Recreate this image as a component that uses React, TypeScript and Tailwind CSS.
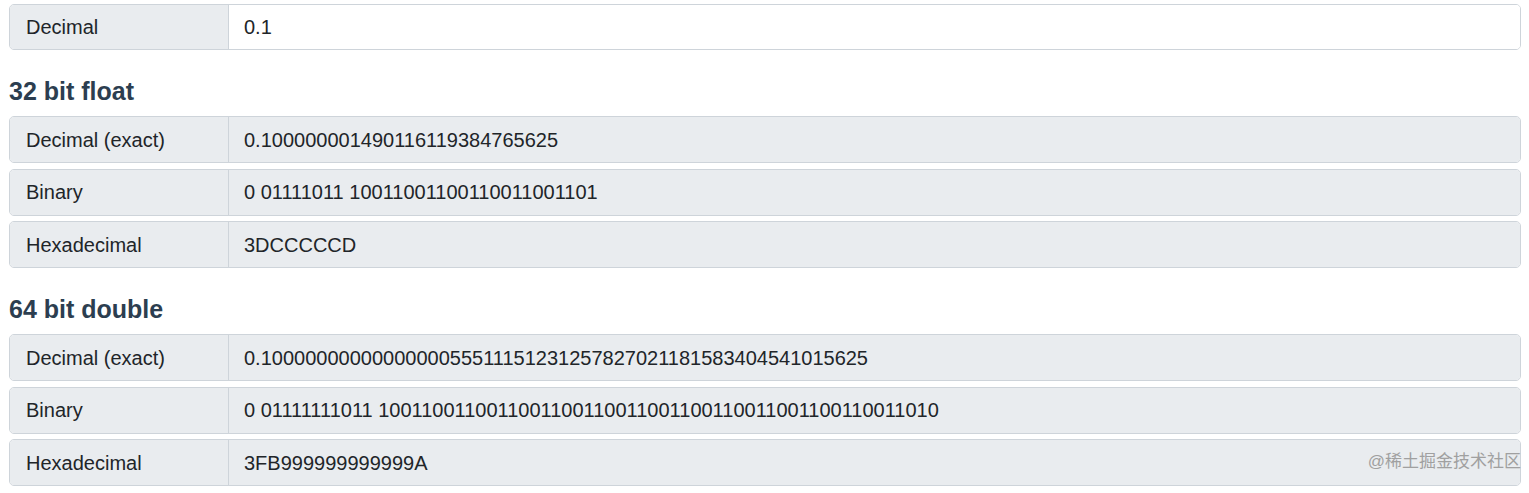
import React from 'react'

type Row = { label: string; value: string; editable?: boolean }

const Field = ({ label, value, editable }: Row) => (
  <div className='flex h-[47px] border border-[#ced4da] rounded-[5px] overflow-hidden text-[20px] text-[#212529]'>
    <div className='w-[219px] shrink-0 bg-[#e9ecef] border-r border-[#ced4da] pl-4 flex items-center'>{label}</div>
    <div className={`flex-1 pl-[15px] flex items-center ${editable ? 'bg-white' : 'bg-[#e9ecef]'}`}>{value}</div>
  </div>
)

const Section = ({ title, rows }: { title: string; rows: Row[] }) => (
  <div>
    <h2 className='mt-[26px] mb-[10px] h-[30px] leading-[30px] text-[25px] font-bold text-[#2c3e50]'>{title}</h2>
    <div className='flex flex-col gap-[5.5px]'>
      {rows.map((r) => (
        <Field key={r.label} {...r} />
      ))}
    </div>
  </div>
)

export default function App() {
  return (
    <div className='relative w-[1529px] h-[493px] bg-white pl-[9px] pr-[8px] pt-[4px] overflow-hidden' style={{ fontFamily: '"Liberation Sans", Arial, sans-serif' }}>
      <div className='[&>div]:h-[46px]'>
        <Field label='Decimal' value='0.1' editable />
      </div>
      <Section
        title='32 bit float'
        rows={[
          { label: 'Decimal (exact)', value: '0.100000001490116119384765625' },
          { label: 'Binary', value: '0 01111011 10011001100110011001101' },
          { label: 'Hexadecimal', value: '3DCCCCCD' },
        ]}
      />
      <Section
        title='64 bit double'
        rows={[
          { label: 'Decimal (exact)', value: '0.1000000000000000055511151231257827021181583404541015625' },
          { label: 'Binary', value: '0 01111111011 1001100110011001100110011001100110011001100110011010' },
          { label: 'Hexadecimal', value: '3FB999999999999A' },
        ]}
      />
      <div className='absolute right-[8px] top-[452px] text-[17px] leading-[20px] text-[#a0a0a0]' style={{ fontFamily: '"Liberation Sans", "Noto Sans CJK SC", sans-serif' }}>
        @稀土掘金技术社区
      </div>
    </div>
  )
}
